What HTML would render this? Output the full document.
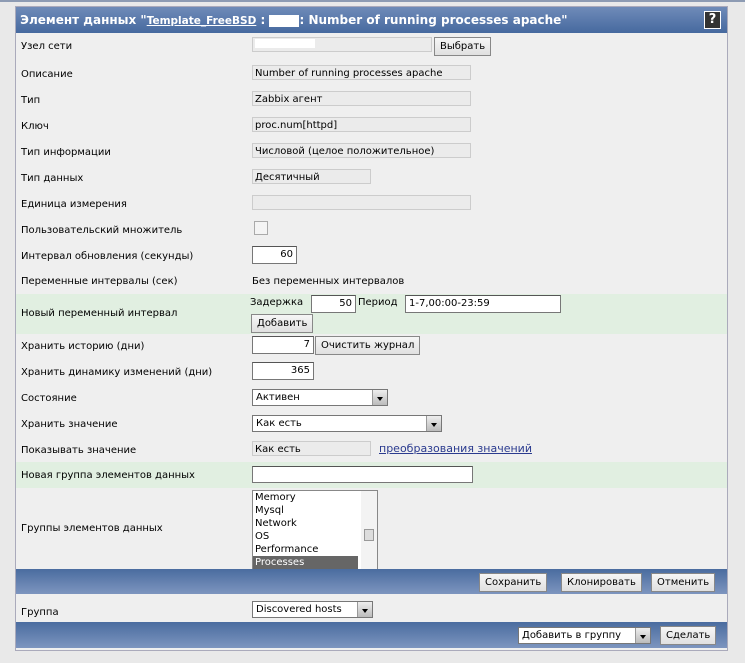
<!DOCTYPE html>
<html><head><meta charset="utf-8"><style>
body{margin:0;width:745px;height:663px;background:#e9e9e9;font-family:"DejaVu Sans","Liberation Sans",sans-serif;font-size:10px;color:#000;position:relative;overflow:hidden}
.topline{position:absolute;left:0;top:0;width:745px;height:2px;background:#8d9bb3}
.panel{position:absolute;left:15px;top:6px;width:711px;height:643px;background:#efefef;border:1px solid #aab}
.hdr{position:absolute;left:0;top:0;width:711px;height:26px;background:linear-gradient(#6f8bb8,#46699f);color:#fff;font-weight:bold;font-size:12px;line-height:26px}
.hdr u{font-size:10.5px}
.help{position:absolute;right:6px;top:4px;width:15px;height:16px;border:1px solid #fff;background:#333;color:#fff;font-size:13px;line-height:16px;text-align:center}
.row{position:absolute;left:0;width:711px}
.lbl{position:absolute;left:5px;top:3px}
.g{background:#e1efe1}
.ro{position:absolute;left:236px;height:15px;border:1px solid #ccc;background:#ebebeb;line-height:15px;padding-left:2px;box-sizing:border-box}
.in{position:absolute;height:18px;border:1px solid #777;border-top-color:#555;background:#fff;line-height:16px;padding:0 3px;box-sizing:border-box}
.r{text-align:right}
.btn{position:absolute;height:19px;border:1px solid #888;background:linear-gradient(#f6f6f6,#e0e0e0);line-height:17px;padding:0 5px;box-sizing:border-box}
.sel{position:absolute;height:17px;border:1px solid #777;background:#fff;line-height:15px;padding-left:3px;box-sizing:border-box}
.sel:after{content:"";position:absolute;right:0;top:0;width:14px;height:15px;background:linear-gradient(#eee,#bbb);border-left:1px solid #999}
.sel i{position:absolute;right:4px;top:7px;border:3px solid transparent;border-top:4px solid #000;z-index:2}
.foot{position:absolute;left:0;width:711px;background:linear-gradient(#4a6c9f,#7d95bf)}
</style></head><body>
<div class="topline"></div>
<div class="panel">
<div class="hdr">&nbsp;Элемент данных "<u>Template_FreeBSD</u> : <span style="background:#fff;display:inline-block;width:30px;height:12px;vertical-align:middle"></span>: Number of running processes apache"<div class="help">?</div></div>

<div class="row" style="top:30px"><span class="lbl" style="top:4px">Узел сети</span><div class="ro" style="width:180px;top:0"><span style="background:#fff;display:inline-block;width:60px;height:9px"></span></div><div class="btn" style="left:418px;top:0">Выбрать</div></div>
<div class="row" style="top:59px"><span class="lbl">Описание</span><div class="ro" style="width:219px;top:-1px">Number of running processes apache</div></div>
<div class="row" style="top:85px"><span class="lbl">Тип</span><div class="ro" style="width:219px;top:-1px">Zabbix агент</div></div>
<div class="row" style="top:111px"><span class="lbl">Ключ</span><div class="ro" style="width:219px;top:-1px">proc.num[httpd]</div></div>
<div class="row" style="top:137px"><span class="lbl">Тип информации</span><div class="ro" style="width:219px;top:-1px">Числовой (целое положительное)</div></div>
<div class="row" style="top:163px"><span class="lbl">Тип данных</span><div class="ro" style="width:119px;top:-1px">Десятичный</div></div>
<div class="row" style="top:189px"><span class="lbl">Единица измерения</span><div class="ro" style="width:219px;top:-1px"></div></div>
<div class="row" style="top:215px"><span class="lbl">Пользовательский множитель</span><div style="position:absolute;left:238px;top:-1px;width:12px;height:12px;border:1px solid #aaa;background:#f4f4f4"></div></div>
<div class="row" style="top:241px"><span class="lbl">Интервал обновления (секунды)</span><div class="in r" style="left:236px;top:-2px;width:45px">60</div></div>
<div class="row" style="top:268px"><span class="lbl" style="top:1px">Переменные интервалы (сек)</span><span style="position:absolute;left:236px;top:1px">Без переменных интервалов</span></div>
<div class="row g" style="top:287px;height:40px"><span class="lbl" style="top:14px">Новый переменный интервал</span><span style="position:absolute;left:234px;top:3px">Задержка</span><div class="in r" style="left:295px;top:1px;width:45px">50</div><span style="position:absolute;left:342px;top:3px">Период</span><div class="in" style="left:389px;top:1px;width:156px">1-7,00:00-23:59</div><div class="btn" style="left:235px;top:20px">Добавить</div></div>
<div class="row" style="top:331px"><span class="lbl">Хранить историю (дни)</span><div class="in r" style="left:236px;top:-2px;width:62px">7</div><div class="btn" style="left:299px;top:-2px">Очистить журнал</div></div>
<div class="row" style="top:357px"><span class="lbl">Хранить динамику изменений (дни)</span><div class="in r" style="left:236px;top:-2px;width:62px">365</div></div>
<div class="row" style="top:383px"><span class="lbl">Состояние</span><div class="sel" style="left:236px;top:-1px;width:136px">Активен<i></i></div></div>
<div class="row" style="top:409px"><span class="lbl">Хранить значение</span><div class="sel" style="left:236px;top:-1px;width:190px">Как есть<i></i></div></div>
<div class="row" style="top:435px"><span class="lbl">Показывать значение</span><div class="ro" style="width:119px;top:-1px">Как есть</div><u style="position:absolute;left:363px;top:0;color:#2b3b8f;font-size:11px">преобразования значений</u></div>
<div class="row g" style="top:455px;height:26px"><span class="lbl" style="top:8px">Новая группа элементов данных</span><div class="in" style="left:236px;top:4px;width:221px;height:17px"></div></div>
<div class="row" style="top:481px;height:80px"><span class="lbl" style="top:35px">Группы элементов данных</span>
<div style="position:absolute;left:236px;top:2px;width:124px;height:78px;border:1px solid #888;background:#fff;overflow:hidden;line-height:13px">
<div style="padding-left:2px">Memory</div><div style="padding-left:2px">Mysql</div><div style="padding-left:2px">Network</div><div style="padding-left:2px">OS</div><div style="padding-left:2px">Performance</div><div style="padding-left:2px;background:#666;color:#fff;width:103px">Processes</div>
<div style="position:absolute;right:0;top:0;width:16px;height:78px;background:#f3f3f3"><div style="position:absolute;left:3px;top:38px;width:8px;height:10px;border:1px solid #999;background:#ddd"></div></div></div></div>
<div class="foot" style="top:562px;height:25px"><div class="btn" style="left:463px;top:4px">Сохранить</div><div class="btn" style="left:545px;top:4px">Клонировать</div><div class="btn" style="left:635px;top:4px">Отменить</div></div>
<div class="row" style="top:596px"><span class="lbl" style="top:4px">Группа</span><div class="sel" style="left:236px;top:-2px;width:121px">Discovered hosts<i></i></div></div>
<div class="foot" style="top:615px;height:26px"><div class="sel" style="left:502px;top:5px;width:133px">Добавить в группу<i></i></div><div class="btn" style="left:644px;top:4px">Сделать</div></div>
</div>
</body></html>
